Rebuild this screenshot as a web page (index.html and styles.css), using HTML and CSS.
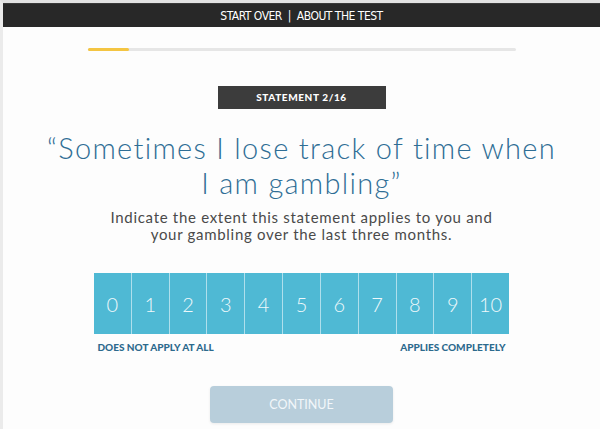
FILE: index.html
```html
<!DOCTYPE html>
<html lang="en">
<head>
    <title>Gambling Self Test</title>
    <meta charset="utf-8">
    <meta name="viewport" content="width=device-width, initial-scale=1.0">
    <link rel="stylesheet" href="styles.css">
</head>
<body>
    <div class="page">
        <!-- Top navigation -->
        <nav class="topbar">
            <a href="#">START OVER</a>
            <span class="sep">|</span>
            <a href="#">ABOUT THE TEST</a>
        </nav>

        <!-- Progress -->
        <div class="progress">
            <div class="progress-fill" style="width: 9.6%"></div>
        </div>

        <main class="question">
            <div class="badge">STATEMENT 2/16</div>
            <h1>&ldquo;Sometimes I lose track of time when I am gambling&rdquo;</h1>
            <p class="hint">Indicate the extent this statement applies to you and<br>your gambling over the last three months.</p>

            <div class="scale">
                <button class="scale-item">0</button>
                <button class="scale-item">1</button>
                <button class="scale-item">2</button>
                <button class="scale-item">3</button>
                <button class="scale-item">4</button>
                <button class="scale-item">5</button>
                <button class="scale-item">6</button>
                <button class="scale-item">7</button>
                <button class="scale-item">8</button>
                <button class="scale-item">9</button>
                <button class="scale-item">10</button>
            </div>
            <div class="scale-labels">
                <span>DOES NOT APPLY AT ALL</span>
                <span>APPLIES COMPLETELY</span>
            </div>

            <button class="continue" disabled>CONTINUE</button>
        </main>
    </div>
</body>
</html>
```

FILE: styles.css
```css
/* General styles */
body {
    margin: 0;
    padding: 0;
    font-family: 'Lato', 'Liberation Sans', sans-serif;
    background: #fdfdfd;
}

.page {
    min-height: 100vh;
    box-sizing: border-box;
    border-top: 3px solid #e2e2e2;
    border-left: 3px solid #ebebeb;
}

/* Top bar */
.topbar {
    height: 24px;
    line-height: 24px;
    background: #282828;
    border-top: 1px solid #3a3a3a;
    box-sizing: border-box;
    text-align: center;
    font-family: 'DejaVu Sans Condensed', 'Liberation Sans Narrow', 'Liberation Sans', sans-serif;
    font-stretch: condensed;
    font-size: 12px;
    letter-spacing: -0.5px;
    color: #ffffff;
}

.topbar a {
    color: #ffffff;
    text-decoration: none;
}

.topbar .sep {
    margin: 0 3px;
}

/* Progress bar */
.progress {
    width: 428px;
    height: 3px;
    margin: 21px auto 0;
    background: #e6e6e6;
    border-radius: 2px;
}

.progress-fill {
    height: 100%;
    background: #f4c542;
    border-radius: 2px;
}

/* Question */
.question {
    display: flex;
    flex-direction: column;
    align-items: center;
}

.badge {
    width: 168px;
    height: 23px;
    line-height: 23px;
    margin-top: 35px;
    background: #3c3c3c;
    color: #ffffff;
    text-align: center;
    font-size: 10px;
    font-weight: 900;
    letter-spacing: 0.6px;
}

h1 {
    margin: 21px 0 0;
    width: 515px;
    text-align: center;
    font-size: 29px;
    line-height: 35px;
    font-weight: 300;
    letter-spacing: 1.3px;
    color: #2f6e95;
}

.hint {
    margin: 9px 0 0;
    text-align: center;
    font-size: 15px;
    line-height: 17px;
    font-weight: 400;
    letter-spacing: 0.7px;
    color: #4a4a4a;
}

/* Scale */
.scale {
    display: flex;
    width: 415px;
    height: 61px;
    margin-top: 30px;
    background: #4fb9d4;
}

.scale-item {
    flex: 1;
    border: none;
    border-left: 1px solid rgba(255, 255, 255, 0.55);
    background: transparent;
    padding: 0;
    font-family: inherit;
    font-size: 20px;
    font-weight: 300;
    color: #eef8fb;
    cursor: pointer;
}

.scale-item:first-child {
    border-left: none;
}

.scale-labels {
    display: flex;
    justify-content: space-between;
    width: 408px;
    margin-top: 7px;
    font-size: 10px;
    line-height: 12px;
    font-weight: 900;
    color: #2d6a8d;
}

/* Continue button */
.continue {
    width: 183px;
    height: 37px;
    margin-top: 33px;
    border: none;
    border-radius: 4px;
    background: #b8cedb;
    color: #f2f7fa;
    font-family: inherit;
    font-size: 12.5px;
    box-shadow: 0 1px 3px rgba(0, 0, 0, 0.08);
}
```
